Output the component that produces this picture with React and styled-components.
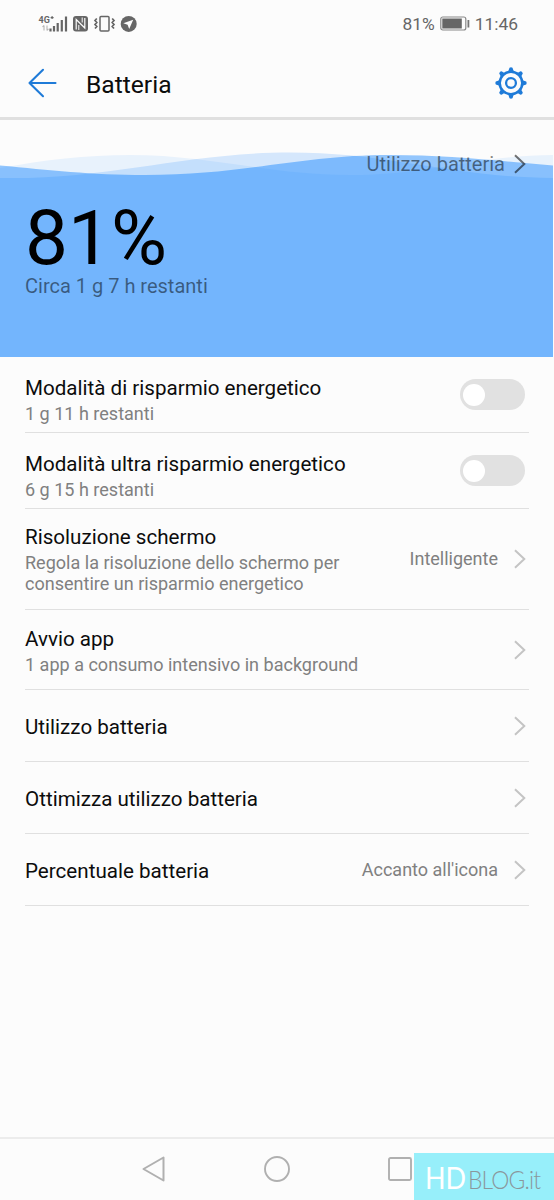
import React from 'react'
import styled, { createGlobalStyle } from 'styled-components'

const GlobalStyle = createGlobalStyle`
  * {
    box-sizing: border-box;
  }
  body {
    margin: 0;
    background: #fcfcfc;
    font-family: Roboto, 'Liberation Sans', sans-serif;
  }
  svg {
    display: block;
    flex: none;
  }
`

const Screen = styled.div`
  position: relative;
  display: flex;
  flex-direction: column;
  width: 554px;
  height: 1200px;
  overflow: hidden;
  background: #fcfcfc;
  color: #0c0c0c;
`

const StatusBar = styled.div`
  display: flex;
  align-items: center;
  justify-content: space-between;
  height: 47px;
  padding: 0 36px 0 38px;
  color: #666;
  font-size: 17.4px;
  line-height: 20px;
`

const StatusGroup = styled.div`
  display: flex;
  align-items: center;
  gap: 5px;
`

const Header = styled.header`
  display: flex;
  align-items: center;
  height: 73px;
  padding: 2px 27px 0 28px;
  border-bottom: 3px solid #e0e0e0;
`

const PageTitle = styled.h1`
  flex: 1;
  margin: 3px 0 0 28px;
  font-size: 24.6px;
  font-weight: 400;
  line-height: 30px;
`

const Hero = styled.section`
  position: relative;
  width: 553px;
  height: 237px;
  padding: 31px 26px 0 25px;
`

const Waves = styled.svg`
  position: absolute;
  top: 0;
  left: 0;
`

const UsageLink = styled.div`
  position: relative;
  display: flex;
  justify-content: flex-end;
  align-items: center;
  gap: 8px;
  height: 26px;
  color: rgba(0, 0, 0, 0.5);
  font-size: 20px;
`

const Level = styled.div`
  position: relative;
  margin-top: 23px;
  padding-top: 2px;
  color: #000;
  font-size: 76.5px;
  line-height: 72px;
`

const Remaining = styled.div`
  position: relative;
  color: rgba(0, 0, 0, 0.5);
  font-size: 20px;
  line-height: 24px;
`

const List = styled.div`
  flex: 1;
  padding: 0 25px;
`

const Row = styled.div`
  display: flex;
  align-items: center;
  height: ${props => props.height}px;
  border-bottom: 1px solid #e0e0e0;
`

const Labels = styled.div`
  flex: 1;
  padding-top: ${props => props.offset || 0}px;
`

const Label = styled.div`
  font-size: 20.6px;
  line-height: 26px;
  white-space: nowrap;
`

const Detail = styled.div`
  margin-top: 2px;
  color: #808080;
  font-size: 18.05px;
  line-height: 21px;
  white-space: pre;
`

const Value = styled.div`
  margin-right: 15px;
  color: #808080;
  font-size: 18px;
  line-height: 22px;
`

const RowArrow = styled.div`
  margin-right: 2px;
`

const Toggle = styled.div`
  width: 65px;
  height: 31px;
  margin-right: 4px;
  padding: 5px 3px;
  border-radius: 16px;
  background: #e1e1e1;
`

const Knob = styled.div`
  width: 22px;
  height: 22px;
  border-radius: 50%;
  background: #fff;
`

const NavBar = styled.nav`
  display: flex;
  justify-content: space-between;
  align-items: center;
  height: 63px;
  padding: 0 142px 2px 141px;
  border-top: 2px solid #ececec;
`

const Watermark = styled.div`
  position: absolute;
  right: 0;
  bottom: 0;
  display: flex;
  align-items: baseline;
  width: 140px;
  height: 47px;
  padding: 2px 0 0 11px;
  background: #97effa;
  font-family: Lato, sans-serif;
  line-height: 44px;
`

const Brand = styled.span`
  width: ${props => props.width}px;
  color: ${props => props.color};
  font-size: ${props => props.size}px;
  font-weight: ${props => props.weight};
  letter-spacing: ${props => props.spacing || 0}px;
  transform: scaleX(${props => props.stretch});
  transform-origin: left;
  white-space: nowrap;
`

const StatusIcons = () => (
  <svg width="100" height="20" viewBox="0 0 100 20">
    <text x="0.5" y="9" fontSize="9" fontWeight="700" fill="#666">
      4G
    </text>
    <path d="M12.6 3.6h3M14.1 2.1v3" stroke="#666" strokeWidth="1.1" />
    <path
      d="M6 11.5v5M4.5 13 6 11.3M9 11.5v5M9 16.5l1.5-1.7"
      stroke="#b5b5b5"
      strokeWidth="1.1"
      fill="none"
    />
    <path
      d="M12.5 14.5v3M16 12v5.5M19.7 9v8.5M23.8 6v11.5M28 2.5v15"
      stroke="#666"
      strokeWidth="2.2"
    />
    <rect x="35" y="2" width="15" height="15.5" rx="3" fill="#666" />
    <path
      d="M38.2 15.5V5.5L46.8 14V4"
      fill="none"
      stroke="#fcfcfc"
      strokeWidth="1.2"
    />
    <path
      d="M40.8 16V11M44.2 3.5V8.5"
      fill="none"
      stroke="#fcfcfc"
      strokeWidth="1"
    />
    <rect
      x="62"
      y="2.6"
      width="9"
      height="14.3"
      rx="1"
      fill="none"
      stroke="#666"
      strokeWidth="1.5"
    />
    <path
      d="M58.8 4.5l-1.8 2 1.8 2-1.8 2 1.8 2-1.8 2M74.2 4.5l1.8 2-1.8 2 1.8 2-1.8 2 1.8 2"
      fill="none"
      stroke="#666"
      strokeWidth="1.7"
    />
    <circle cx="90.7" cy="9.9" r="8" fill="#666" />
    <path d="M95.2 5.8l-4 9.2-1.6-4.2-4.3-1.5z" fill="#fcfcfc" />
  </svg>
)

const BatteryIcon = () => (
  <svg width="30" height="15" viewBox="0 0 30 15">
    <rect
      x="0.8"
      y="1"
      width="25"
      height="13"
      rx="2"
      fill="none"
      stroke="#888"
      strokeWidth="1.2"
    />
    <rect x="2.3" y="2.5" width="19.5" height="10" fill="#666" />
    <path d="M28.4 4v7.5" stroke="#777" strokeWidth="1.8" />
  </svg>
)

const BackIcon = () => (
  <svg width="30" height="30" viewBox="0 0 30 30">
    <path
      d="M27.5 15H1.5M15 1.8L1.5 15 15 28.2"
      fill="none"
      stroke="#1f7bd8"
      strokeWidth="2.1"
      strokeLinecap="round"
      strokeLinejoin="round"
    />
  </svg>
)

const GearIcon = () => (
  <svg width="32" height="32" viewBox="0 0 32 32">
    <g fill="none" stroke="#1f7bd8">
      <circle cx="16" cy="16" r="11.3" strokeWidth="2.5" />
      <circle cx="16" cy="16" r="4.9" strokeWidth="2.3" />
    </g>
    {[0, 45, 90, 135, 180, 225, 270, 315].map(angle => (
      <path
        key={angle}
        d="M11.8 5.2Q14 4 14 2.3a2 2 0 0 1 4 0Q18 4 20.2 5.2z"
        fill="#1f7bd8"
        transform={`rotate(${angle} 16 16)`}
      />
    ))}
  </svg>
)

const Chevron = ({ color = '#c4c4c4' }) => (
  <svg width="14" height="22" viewBox="0 0 14 22">
    <path
      d="M2 2.2l9.3 8.8L2 19.8"
      fill="none"
      stroke={color}
      strokeWidth="2"
    />
  </svg>
)

const rows = [
  {
    height: 76,
    offset: 10,
    label: 'Modalità di risparmio energetico',
    detail: '1 g 11 h restanti',
    toggle: true,
  },
  {
    height: 76,
    offset: 10,
    label: 'Modalità ultra risparmio energetico',
    detail: '6 g 15 h restanti',
    toggle: true,
  },
  {
    height: 101,
    offset: 0,
    label: 'Risoluzione schermo',
    detail:
      'Regola la risoluzione dello schermo per\nconsentire un risparmio energetico',
    value: 'Intelligente',
  },
  {
    height: 80,
    offset: 2,
    label: 'Avvio app',
    detail: '1 app a consumo intensivo in background',
  },
  { height: 72, offset: 2, label: 'Utilizzo batteria' },
  { height: 72, offset: 2, label: 'Ottimizza utilizzo batteria' },
  {
    height: 72,
    offset: 2,
    label: 'Percentuale batteria',
    value: "Accanto all'icona",
  },
]

export default () => (
  <Screen>
    <GlobalStyle />
    <StatusBar>
      <StatusIcons />
      <StatusGroup>
        <span>81%</span>
        <BatteryIcon />
        <span>11:46</span>
      </StatusGroup>
    </StatusBar>
    <Header>
      <BackIcon />
      <PageTitle>Batteria</PageTitle>
      <GearIcon />
    </Header>
    <Hero>
      <Waves width="553" height="237" viewBox="0 0 553 237">
        <g fill="#047cff">
          <path
            d="M0 48C45 40 85 35 130 35C210 35 270 55 350 55C430 55 480 35 553 35V237H0z"
            fillOpacity="0.08"
          />
          <path
            d="M0 58C110 60 185 32.5 290 32.5C390 32.5 450 57 553 58V237H0z"
            fillOpacity="0.155"
          />
          <path
            d="M0 45.5C50 50 90 55 145 55C245 55 300 35 390 35C450 35 500 41 553 45.5V237H0z"
            fillOpacity="0.424"
          />
        </g>
      </Waves>
      <UsageLink>
        Utilizzo batteria
        <Chevron color="rgba(0, 0, 0, 0.55)" />
      </UsageLink>
      <Level>81%</Level>
      <Remaining>Circa 1 g 7 h restanti</Remaining>
    </Hero>
    <List>
      {rows.map(row => (
        <Row key={row.label} height={row.height}>
          <Labels offset={row.offset}>
            <Label>{row.label}</Label>
            {row.detail && <Detail>{row.detail}</Detail>}
          </Labels>
          {row.value && <Value>{row.value}</Value>}
          {row.toggle ? (
            <Toggle>
              <Knob />
            </Toggle>
          ) : (
            <RowArrow>
              <Chevron />
            </RowArrow>
          )}
        </Row>
      ))}
    </List>
    <NavBar>
      <svg width="24" height="28" viewBox="0 0 24 28">
        <path
          d="M22.5 2.5v23L2.5 14z"
          fill="none"
          stroke="#b0b0b0"
          strokeWidth="2"
          strokeLinejoin="round"
        />
      </svg>
      <svg width="26" height="26" viewBox="0 0 26 26">
        <circle
          cx="13"
          cy="13"
          r="12"
          fill="none"
          stroke="#b0b0b0"
          strokeWidth="1.9"
        />
      </svg>
      <svg width="24" height="24" viewBox="0 0 24 24">
        <rect
          x="1"
          y="1"
          width="22"
          height="22"
          rx="1.5"
          fill="none"
          stroke="#b0b0b0"
          strokeWidth="1.9"
        />
      </svg>
    </NavBar>
    <Watermark>
      <Brand width={43} size={31} weight={400} color="#fff" stretch={0.87}>
        HD
      </Brand>
      <Brand
        width={74}
        size={26}
        weight={300}
        color="#8a979c"
        stretch={0.88}
        spacing={-1}
      >
        BLOG.it
      </Brand>
    </Watermark>
  </Screen>
)
